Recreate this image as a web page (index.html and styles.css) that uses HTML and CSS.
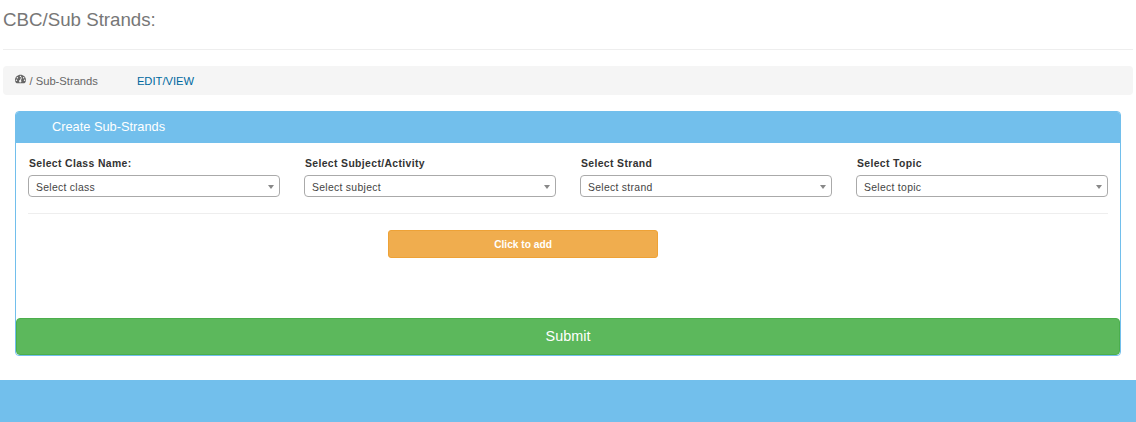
FILE: index.html
```html
<!DOCTYPE html>
<html lang="en">
<head>
<meta charset="utf-8">
<title>CBC/Sub Strands</title>
<link rel="stylesheet" href="styles.css">
</head>
<body>
<main class="content">
  <h1 class="title">CBC/Sub Strands:</h1>
  <hr class="rule">
  <nav class="crumbs">
    <svg class="gauge" viewBox="0 0 12 10" width="11" height="10" aria-hidden="true">
      <path fill-rule="evenodd" fill="#666" d="M6 .3C2.7.3 0 2.8 0 6c0 1.2.3 2.300 1 3.200.2.300.5.500.9.500h8.200c.4 0 .7-.2.9-.5.7-.9 1-2 1-3.200C12 2.800 9.300.3 6 .3ZM6 1.500a.8.8 0 1 1 0 1.600.8.800 0 0 1 0-1.600ZM2.600 2.900a.8.800 0 1 1 0 1.600.8.800 0 0 1 0-1.600ZM9.400 2.900a.8.800 0 1 1 0 1.600.8.800 0 0 1 0-1.600ZM1.600 5.500a.8.800 0 1 1 0 1.600.8.800 0 0 1 0-1.600ZM10.400 5.500a.8.800 0 1 1 0 1.600.8.800 0 0 1 0-1.600ZM7.500 3.600 6.500 6.400a1.300 1.300 0 1 1-1-.3l1.100-2.800a.5.500 0 0 1 .9.300Z"/>
    </svg>
    <span class="crumb-text">/ Sub-Strands</span>
    <a class="crumb-link" href="#">EDIT/VIEW</a>
  </nav>
  <section class="panel">
    <header class="panel-head">Create Sub-Strands</header>
    <div class="panel-body">
      <div class="fields">
        <div class="field">
          <label class="field-label">Select Class Name:</label>
          <div class="select"><span>Select class</span><i class="caret"></i></div>
        </div>
        <div class="field">
          <label class="field-label">Select Subject/Activity</label>
          <div class="select"><span>Select subject</span><i class="caret"></i></div>
        </div>
        <div class="field">
          <label class="field-label">Select Strand</label>
          <div class="select"><span>Select strand</span><i class="caret"></i></div>
        </div>
        <div class="field">
          <label class="field-label">Select Topic</label>
          <div class="select"><span>Select topic</span><i class="caret"></i></div>
        </div>
      </div>
      <hr class="rule inner-rule">
      <div class="add-row"><button class="add-btn" type="button">Click to add</button></div>
    </div>
    <button class="submit-btn" type="button">Submit</button>
  </section>
</main>
<footer class="footer"></footer>
</body>
</html>
```

FILE: styles.css
```css
* { box-sizing: border-box; }
html, body { margin: 0; padding: 0; }
body {
  width: 1136px;
  height: 422px;
  overflow: hidden;
  background: #fff;
  font-family: "Liberation Sans", Arial, sans-serif;
  color: #333;
  display: flex;
  flex-direction: column;
}
.content { padding: 0 3px; height: 380px; }
.title {
  margin: 0;
  padding-top: 10px;
  height: 49px;
  font-size: 18.720px;
  line-height: 20px;
  font-weight: 400;
  color: #777;
}
.rule { border: 0; border-top: 1px solid #eee; margin: 0; }
.crumbs {
  margin-top: 16px;
  height: 29px;
  background: #f5f5f5;
  border-radius: 4px;
  display: flex;
  align-items: center;
  padding-left: 12px;
  font-size: 11.200px;
}
.gauge { margin-top: -4px; }
.crumb-text { margin-left: 3.500px; color: #666; }
.crumb-link { margin-left: 39px; color: #00699f; text-decoration: none; }
.panel {
  margin: 16px 12px 0;
  height: 245px;
  border: 1px solid #72bfec;
  border-radius: 4px;
  display: flex;
  flex-direction: column;
  overflow: hidden;
}
.panel-head {
  height: 31px;
  background: #72bfec;
  color: #fff;
  font-size: 12.800px;
  line-height: 30px;
  padding-left: 36px;
}
.panel-body { flex: 1; padding: 0 12px; }
.fields { display: grid; grid-template-columns: repeat(4, 252px); column-gap: 24px; }
.field-label {
  display: block;
  margin: 14px 0 0 1px;
  height: 18px;
  font-size: 10.400px;
  line-height: 14px;
  font-weight: 700;
  letter-spacing: .37px;
  color: #333;
}
.select {
  height: 22px;
  border: 1px solid #aaa;
  border-radius: 4px;
  background: #fff;
  padding: 2px 7px 0;
  display: flex;
  align-items: center;
  justify-content: space-between;
  font-size: 10.400px;
  letter-spacing: .3px;
  color: #444;
}
.caret {
  width: 0;
  height: 0;
  border-left: 3.500px solid transparent;
  border-right: 3.500px solid transparent;
  border-top: 4px solid #888;
  margin-right: -2px;
}
.inner-rule { margin-top: 16px; }
.add-row { display: flex; margin: 16px 0 0 360px; }
.add-btn {
  width: 270px;
  height: 28px;
  background: #f0ad4e;
  border: 1px solid #eea236;
  border-radius: 3px;
  color: #fff;
  font-family: inherit;
  font-size: 10.200px;
  font-weight: 700;
  padding: 0;
}
.submit-btn {
  display: block;
  width: 100%;
  height: 37px;
  flex: none;
  background: #5cb85c;
  border: 1px solid #4cae4c;
  border-radius: 4px;
  color: #fff;
  font-family: inherit;
  font-size: 14.400px;
  padding: 0 0 2px;
}
.footer { height: 42px; background: #72bfec; }
```
